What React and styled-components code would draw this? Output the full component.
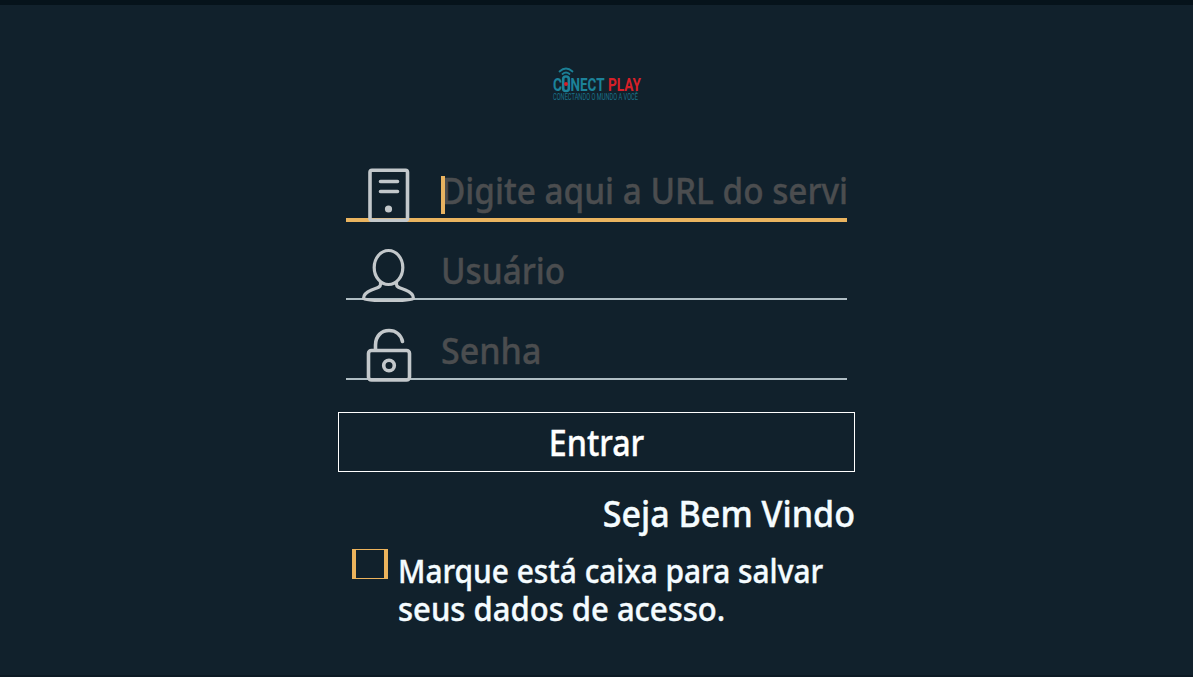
import React from "react"
import styled, { createGlobalStyle } from "styled-components"

const GlobalStyle = createGlobalStyle`
  * {
    box-sizing: border-box;
  }

  body {
    margin: 0;
    background: #11212c;
    font-family: "Noto Sans", sans-serif;
  }
`

const Page = styled.main`
  display: flex;
  flex-direction: column;
  align-items: center;
  height: 677px;
  overflow: hidden;
  background: #11212c;
  border-top: 5px solid #06131b;
  border-bottom: 2px solid #0d1a24;
`

const Logo = styled.svg`
  display: block;
  width: 92px;
  height: 36px;
  margin-top: 61px;
  overflow: visible;
`

const Form = styled.form`
  width: 517px;
  margin: 40px 0 0;
`

const Fields = styled.div`
  padding: 0 8px;
`

const Field = styled.label`
  position: relative;
  display: flex;
  align-items: flex-end;
  height: 80px;

  &::before {
    content: "";
    position: absolute;
    left: 0;
    right: 0;
    bottom: ${({ $active }) => ($active ? 0 : 2)}px;
    height: ${({ $active }) => ($active ? 4 : 2)}px;
    background: ${({ $active }) => ($active ? "#eab45f" : "#b0bec4")};
  }
`

const Icon = styled.svg`
  position: relative;
  flex: none;
  width: 56px;
  height: 56px;
  margin-left: 14px;
  fill: none;
  stroke: #c3c8cb;
  stroke-width: ${({ $stroke }) => $stroke || 3.6};
  stroke-linecap: round;
  stroke-linejoin: round;
`

const Placeholder = styled.span`
  position: relative;
  flex: 1;
  height: 56px;
  margin-left: 25px;
  white-space: nowrap;
  font-size: 37px;
  font-weight: 500;
  line-height: 48px;
  color: #4b4d4f;
`

/* condensed run of text, squeezed from one side */
const Narrow = styled.span`
  display: block;
  transform: scaleX(${({ $scale }) => $scale});
  transform-origin: ${({ $origin }) => $origin || "left"} center;
  -webkit-text-stroke: 0.4px currentColor;
`

const Caret = styled.i`
  position: absolute;
  left: 0;
  top: 10px;
  width: 4px;
  height: 38px;
  background: #e9b360;
`

const Button = styled.button`
  display: block;
  width: 100%;
  height: 60px;
  margin-top: 30px;
  padding: 0 0 1px;
  border: 1px solid #fff;
  background: transparent;
  color: #fff;
  font: 500 37px/50px "Noto Sans", sans-serif;
`

const Welcome = styled.p`
  margin: 16px 0 0;
  text-align: right;
  white-space: nowrap;
  font-size: 37px;
  font-weight: 500;
  line-height: 50px;
  color: #f5fcff;
`

const Remember = styled.label`
  display: flex;
  align-items: flex-start;
  margin-top: 11px;
  padding-left: 14px;
`

const CheckBox = styled.span`
  flex: none;
  width: 36px;
  height: 30px;
  border: solid #ecb35c;
  border-width: 1px 4px;
`

const RememberText = styled.span`
  margin: 3px 0 0 10px;
  white-space: nowrap;
  font-size: 33px;
  font-weight: 500;
  line-height: 38px;
  color: #f5fcff;
`

export default function App() {
  return (
    <>
      <GlobalStyle />
      <Page>
        <Logo viewBox="1 0 92 36" role="img" aria-label="Conect Play">
          {/* signal waves */}
          <g fill="none" stroke="#1b7f95" strokeWidth="1.8" strokeLinecap="round">
            <path d="M9.5 5.500 Q16 -0.500 22.500 5.500" />
            <path d="M12.500 8 Q16 5 19.500 8" />
          </g>
          <g fontFamily="Roboto, sans-serif" fontWeight="700">
            <text x="3" y="25" fontSize="18" fill="#1c8299" textLength="9" lengthAdjust="spacingAndGlyphs">C</text>
            <text x="20.5" y="25" fontSize="18" fill="#1c8299" textLength="34" lengthAdjust="spacingAndGlyphs">NECT</text>
            <text x="58" y="25" fontSize="18" fill="#d62028" textLength="33" lengthAdjust="spacingAndGlyphs">PLAY</text>
          </g>
          {/* remote control standing in for the O */}
          <rect x="13.2" y="10.5" width="5.6" height="14.5" rx="2.5" fill="#11212c" stroke="#1c8299" strokeWidth="2.6" />
          <circle cx="16" cy="18" r="2" fill="#d62028" />
          <text
            x="3"
            y="34"
            fontFamily="Roboto, sans-serif"
            fontSize="8.5"
            fill="#1a7189"
            textLength="85"
            lengthAdjust="spacingAndGlyphs"
          >
            CONECTANDO O MUNDO A VOCÊ
          </text>
        </Logo>

        <Form>
          <Fields>
            <Field $active>
              <Icon viewBox="0 0 56 56">
                <rect x="10" y="4.3" width="37.5" height="50" rx="2" />
                <path d="M20.5 15.5h17M20.5 25.5h17" />
                <circle cx="28.5" cy="43" r="3.6" fill="#c3c8cb" stroke="none" />
              </Icon>
              <Placeholder>
                <Narrow $scale={0.9}>Digite aqui a URL do servi</Narrow>
                <Caret />
              </Placeholder>
            </Field>
            <Field>
              <Icon viewBox="0 0 56 56" $stroke={3.2}>
                <ellipse cx="28.5" cy="21.5" rx="14.3" ry="17" />
                <path d="M20.5 36v2.5c0 3-4 3.5-9 5.5-5 2-8 4-8 8.5C8 55.5 49 55.5 53.5 52.5c0-4.5-3-6.5-8-8.5-5-2-9-2.5-9-5.5V36" />
              </Icon>
              <Placeholder>
                <Narrow $scale={0.9}>Usuário</Narrow>
              </Placeholder>
            </Field>
            <Field>
              <Icon viewBox="0 0 56 56">
                <rect x="8.5" y="24.5" width="41" height="29.5" rx="3" />
                <path d="M15.5 24V19C15.5 10 21.5 4.5 29 4.5c7 0 12 4.5 13.5 11" />
                <circle cx="29" cy="39.5" r="5.3" />
              </Icon>
              <Placeholder>
                <Narrow $scale={0.92}>Senha</Narrow>
              </Placeholder>
            </Field>
          </Fields>

          <Button type="button">
            <Narrow $scale={0.87} $origin="center">Entrar</Narrow>
          </Button>
          <Welcome>
            <Narrow $scale={0.921} $origin="right">Seja Bem Vindo</Narrow>
          </Welcome>

          <Remember>
            <CheckBox />
            <RememberText>
              <Narrow $scale={0.905}>Marque está caixa para salvar</Narrow>
              <Narrow $scale={0.94}>seus dados de acesso.</Narrow>
            </RememberText>
          </Remember>
        </Form>
      </Page>
    </>
  )
}
